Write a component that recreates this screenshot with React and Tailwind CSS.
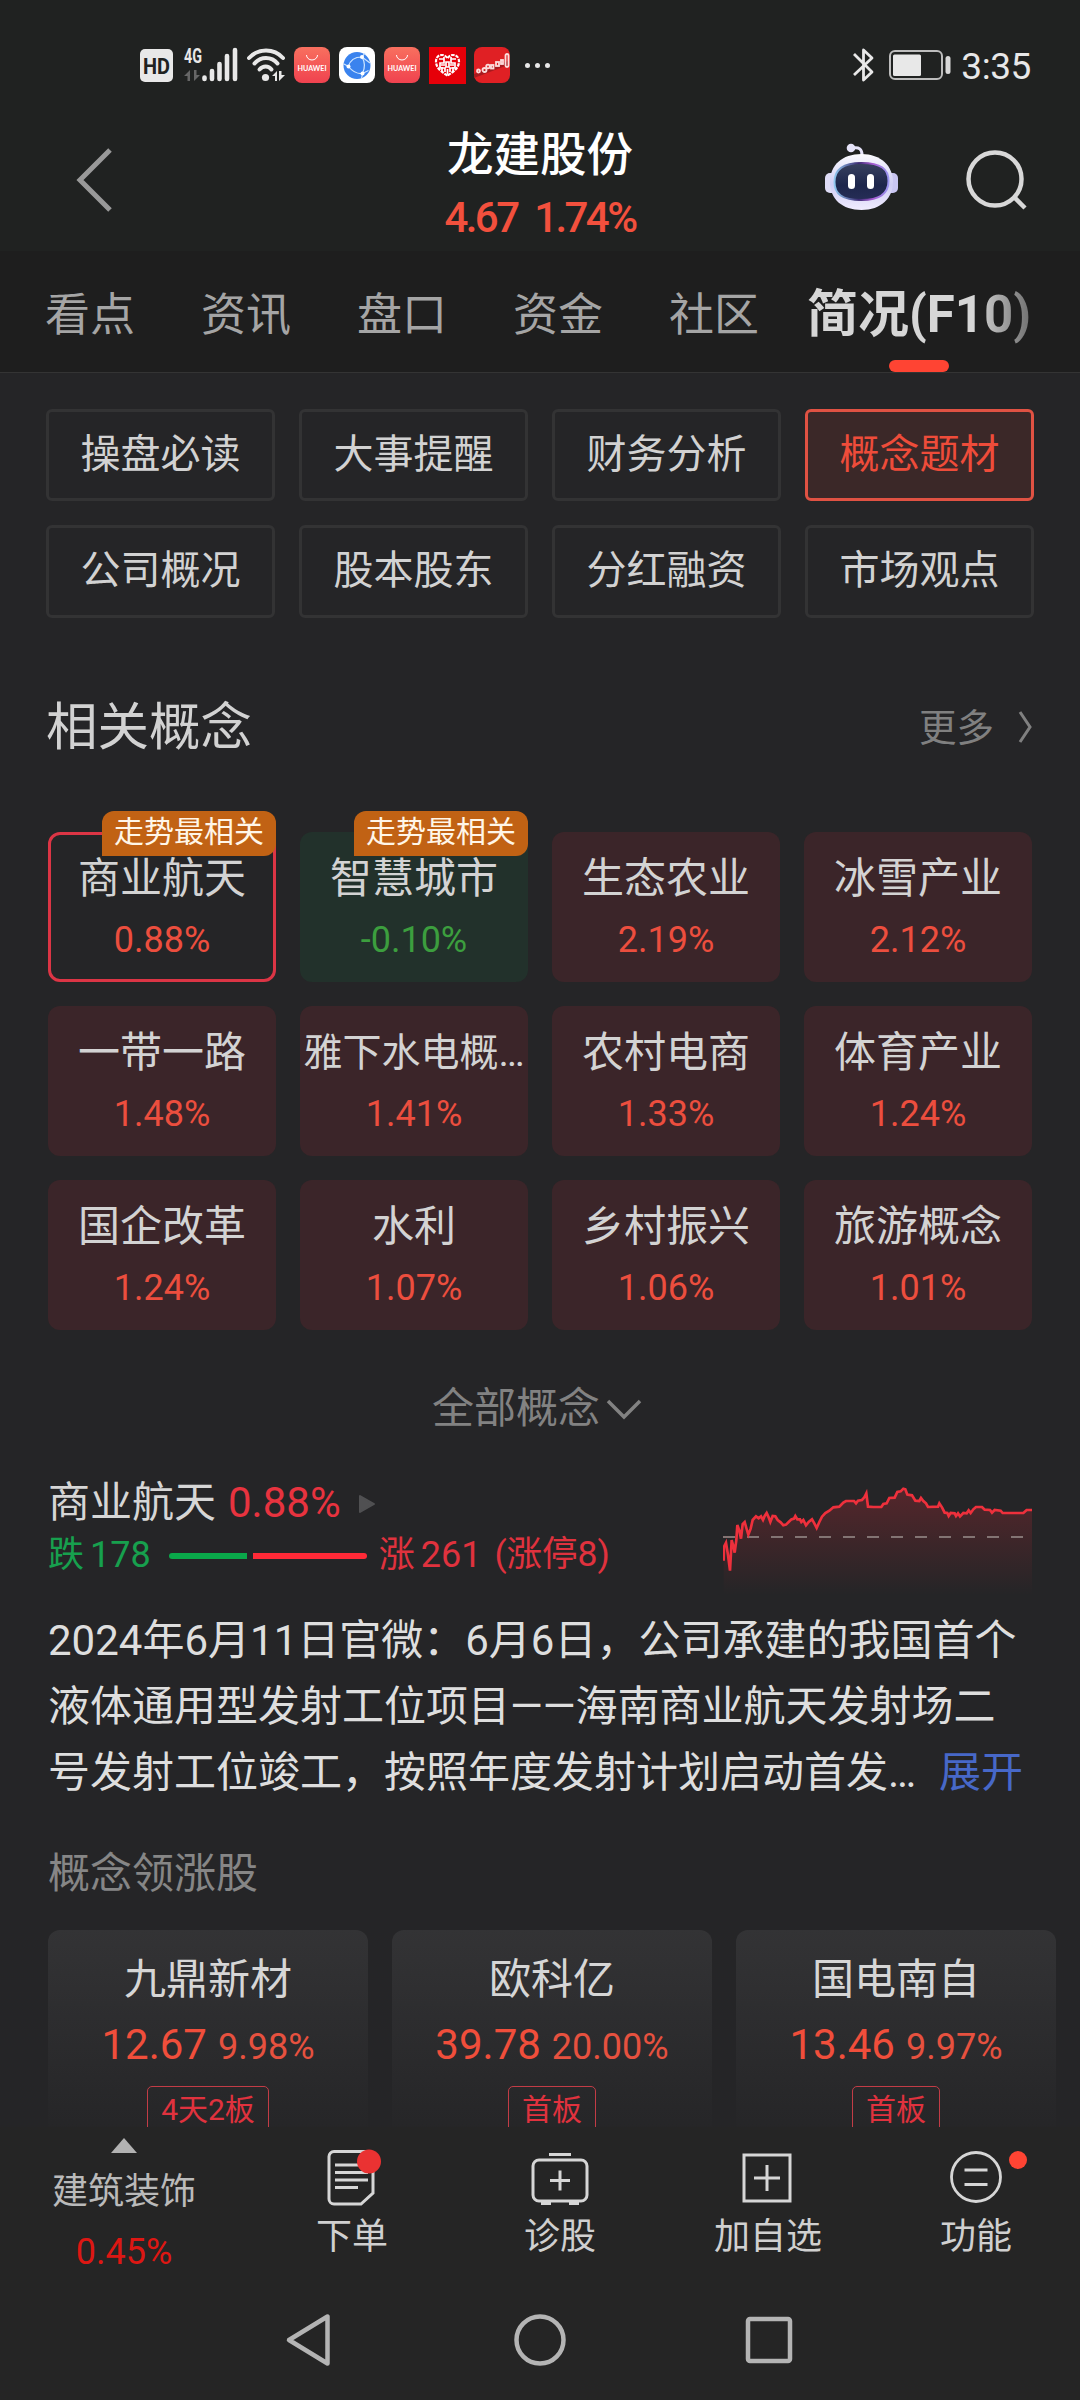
import React from "react";

const navButtons = ["操盘必读", "大事提醒", "财务分析", "概念题材", "公司概况", "股本股东", "分红融资", "市场观点"];

const concepts = [
  { name: "商业航天", pct: "0.88%", kind: "selected", badge: true },
  { name: "智慧城市", pct: "-0.10%", kind: "down", badge: true },
  { name: "生态农业", pct: "2.19%" },
  { name: "冰雪产业", pct: "2.12%" },
  { name: "一带一路", pct: "1.48%" },
  { name: "雅下水电概…", pct: "1.41%", small: true },
  { name: "农村电商", pct: "1.33%" },
  { name: "体育产业", pct: "1.24%" },
  { name: "国企改革", pct: "1.24%" },
  { name: "水利", pct: "1.07%" },
  { name: "乡村振兴", pct: "1.06%" },
  { name: "旅游概念", pct: "1.01%" },
];

const leaders = [
  { name: "九鼎新材", price: "12.67", pct: "9.98%", tag: "4天2板" },
  { name: "欧科亿", price: "39.78", pct: "20.00%", tag: "首板" },
  { name: "国电南自", price: "13.46", pct: "9.97%", tag: "首板" },
];

const linePoints =
  "191,362 192,320 198,308 204,345 210,392 215,300 220,318 224,338 229,300 232,255 238,272 243,296 248,252 254,246 259,264 265,284 272,266 278,240 288,229 296,235 303,229 309,240 314,228 320,219 326,232 331,246 338,228 346,229 353,240 362,247 370,256 378,254 386,246 394,238 402,236 406,228 412,238 420,238 424,246 430,240 438,256 446,246 456,238 463,250 470,264 478,246 486,230 496,219 508,212 520,202 538,200 550,188 558,183 582,183 588,190 594,182 606,180 613,172 619,160 624,200 640,201 664,201 670,192 680,190 688,174 704,173 712,156 722,154 730,146 736,148 742,164 756,166 766,182 778,183 783,174 790,183 798,190 804,201 834,200 838,190 846,202 854,218 862,219 866,228 872,219 884,220 888,228 894,220 900,229 910,219 920,220 926,211 932,219 940,208 948,201 966,201 974,209 990,210 996,218 1004,210 1022,212 1028,219 1090,219 1100,210 1116,210";

function HuaweiIcon({ id }) {
  return (
    <svg width="36" height="36" viewBox="0 0 36 36">
      <defs>
        <linearGradient id={id} x1="0" y1="0" x2="0" y2="1">
          <stop offset="0" stopColor="#f8705f" />
          <stop offset="1" stopColor="#f0424f" />
        </linearGradient>
      </defs>
      <rect width="36" height="36" rx="8" fill={`url(#${id})`} />
      <path d="M12.500 8a5.500 5 0 0 0 11 0" fill="none" stroke="#fff" strokeWidth="1" />
      <text x="18" y="24" textAnchor="middle" fontSize="6.500" fontWeight="700" fontFamily="Lato, sans-serif" fill="#fff" textLength="29" lengthAdjust="spacingAndGlyphs">HUAWEI</text>
    </svg>
  );
}

function StatusBar() {
  return (
    <div className="flex h-[130px] items-center pl-[140px] pr-[49px]">
      <svg className="mt-[1px]" width="33" height="33" viewBox="0 0 33 33">
        <rect width="33" height="33" rx="5" fill="#e8e8e8" />
        <text x="16.500" y="24.500" textAnchor="middle" fontSize="22" fontWeight="700" fontFamily="Roboto, sans-serif" fill="#202221" textLength="27" lengthAdjust="spacingAndGlyphs">HD</text>
      </svg>
      <svg className="ml-[11px] overflow-visible" width="54" height="36" viewBox="0 0 54 36">
        <text x="0" y="16" fontSize="20.500" fontWeight="700" fontFamily="Roboto, sans-serif" fill="#e8e8e8" textLength="18" lengthAdjust="spacingAndGlyphs">4G</text>
        <path d="M0 29l6-6v11H3.500v-5zM10 23v11l6-6h-3.500v-5z" fill="#666" />
        <path d="M20.500 30.500V32M28 24v8M35.500 17v15M43 9v23M51 3v29" stroke="#e8e8e8" strokeWidth="4.600" strokeLinecap="round" />
      </svg>
      <svg className="ml-[8px]" width="40" height="36" viewBox="0 0 40 36">
        <g fill="none" stroke="#e8e8e8" strokeWidth="4" strokeLinecap="round">
          <path d="M3 11C12 1 28 1 37 11" />
          <path d="M8.500 16.500c6-7.500 17-7.500 23 0" />
          <path d="M13.500 22.500c3.500-4 9-4 12 0" />
        </g>
        <circle cx="19.500" cy="30.500" r="3.600" fill="#e8e8e8" />
        <path d="M26 29l5-5v10h-2v-5zM33 24v10l6-6h-3.500v-4z" fill="#e8e8e8" />
      </svg>
      <div className="ml-[8px] flex items-center gap-[9px]">
        <HuaweiIcon id="hw1" />
        <svg width="36" height="36" viewBox="0 0 36 36">
          <rect width="36" height="36" rx="8" fill="#fff" />
          <circle cx="18" cy="18.500" r="13.500" fill="#3a83ee" />
          <g fill="none" stroke="#cfe6ff" strokeWidth="1.200">
            <path d="M23 10C16 10 11 13 9.500 19.500C13 24 18 27 23.500 26.500C26 21 26 15 23 10z" />
            <path d="M23 10l3-4M9.500 19.500L5 17M23.500 26.500l-1 5M23 10l8 6M23.500 26.500l6-3" />
          </g>
          <circle cx="23" cy="10" r="2" fill="#fff" />
          <circle cx="9.500" cy="19.500" r="2" fill="#fff" />
          <circle cx="23.500" cy="26.500" r="2" fill="#fff" />
        </svg>
        <HuaweiIcon id="hw2" />
        <svg width="37" height="37" viewBox="0 0 37 37">
          <rect width="37" height="37" fill="#e60009" />
          <path d="M18.500 28.500C11 24 7 20 7 14.500c0-4 2.500-6.500 6-6.500 2.500 0 4.500 1.500 5.500 3.500C19.500 9.500 21.500 8 24 8c3.500 0 6 2.500 6 6.500 0 5.500-4 9.500-11.500 14z" fill="none" stroke="#fff" strokeWidth="2.200" strokeDasharray="3.500 1" />
          <path d="M10 12h5v4h-4v5h5v4M27 12h-5v4h4v5h-5v4M15 10v4M22 10v4M17 15h3v5h-3zM18.500 22v5M12 18h4M21 18h4M13 20v4M24 20v4" fill="none" stroke="#fff" strokeWidth="1.700" />
        </svg>
        <svg className="-ml-[1px]" width="36" height="36" viewBox="0 0 36 36">
          <rect width="36" height="36" rx="8" fill="#e02024" />
          <path d="M0 27L34 14v4L0 31z" fill="#a81a1e" />
          <g fill="none" stroke="#fbdcdc" strokeWidth="1.800">
            <circle cx="4.500" cy="24" r="1.500" /><circle cx="10.500" cy="23" r="2" /><circle cx="14" cy="19.500" r="1.800" />
            <rect x="17" y="18" width="2.500" height="3.500" /><rect x="22" y="15" width="3" height="4" /><rect x="27" y="13" width="2" height="4" />
            <rect x="31.500" y="7" width="3" height="13" rx="1.500" />
          </g>
        </svg>
      </div>
      <div className="ml-[15px] flex gap-[5px]">
        <i className="size-[5px] rounded-full bg-[#e8e8e8]" />
        <i className="size-[5px] rounded-full bg-[#e8e8e8]" />
        <i className="size-[5px] rounded-full bg-[#e8e8e8]" />
      </div>
      <svg className="ml-auto" width="23" height="36" viewBox="0 0 23 36">
        <path d="M2 7l18 18-8.500 8V3L20 11 2 28" fill="none" stroke="#e8e8e8" strokeWidth="2.800" strokeLinejoin="round" />
      </svg>
      <svg className="ml-[14px]" width="62" height="30" viewBox="0 0 62 30">
        <rect x="1" y="1" width="52" height="28" rx="5" fill="none" stroke="#bdbdbd" strokeWidth="2" />
        <rect x="4" y="4.500" width="28" height="21.500" rx="1.500" fill="#e8e8e8" />
        <rect x="56.500" y="6" width="5" height="18" rx="2.500" fill="#d8d8d8" />
      </svg>
      <span className="ml-[10px] mt-[3px] text-[37px] leading-[40px] tracking-[-0.400px] text-[#e8e8e8]">3:35</span>
    </div>
  );
}

function Robot() {
  return (
    <svg width="73" height="68" viewBox="0 0 73 68">
      <defs>
        <linearGradient id="shell" x1="0" y1="0" x2="0" y2="1">
          <stop offset="0" stopColor="#fbfbff" />
          <stop offset="0.550" stopColor="#cfcdf4" />
          <stop offset="1" stopColor="#f0ecff" />
        </linearGradient>
        <linearGradient id="rim" x1="0" y1="0" x2="1" y2="0">
          <stop offset="0" stopColor="#8fc6ee" />
          <stop offset="0.450" stopColor="#3b2a72" />
          <stop offset="0.700" stopColor="#a55ad0" />
          <stop offset="1" stopColor="#9a96f0" />
        </linearGradient>
        <linearGradient id="face" x1="0" y1="0" x2="0" y2="1">
          <stop offset="0" stopColor="#38415f" />
          <stop offset="0.600" stopColor="#1d264c" />
          <stop offset="1" stopColor="#262d56" />
        </linearGradient>
      </defs>
      <rect x="0" y="30" width="12" height="20" rx="5" fill="#dedcf6" />
      <rect x="61" y="30" width="12" height="20" rx="5" fill="#c9c6f2" />
      <path d="M28 5c6-1 9 1 9 7" fill="none" stroke="#e6e4fa" strokeWidth="3" />
      <circle cx="26" cy="5" r="4.300" fill="#e6e4fa" />
      <path d="M36.500 11C56 11 68 23 68 39S56 67 36.500 67 5 56 5 39 17 11 36.500 11z" fill="url(#shell)" />
      <path d="M36.500 20C56 20 63.500 26 63.500 38S56 57 36.500 57 9.500 51 9.500 39 17 20 36.500 20z" fill="url(#face)" stroke="url(#rim)" strokeWidth="2" />
      <rect x="23" y="31" width="7" height="15" rx="3.500" fill="#fff" />
      <rect x="42" y="31" width="7" height="15" rx="3.500" fill="#fff" />
    </svg>
  );
}

function Header() {
  return (
    <div className="grid h-[121px] grid-cols-[1fr_auto_1fr]">
      <svg className="ml-[75px] mt-[18px]" width="40" height="64" viewBox="0 0 40 64">
        <path d="M35 2L5 32l30 30" fill="none" stroke="#999" strokeWidth="5" />
      </svg>
      <div className="flex flex-col items-center">
        <h1 className="text-[46.500px] font-medium leading-[50px] text-white">龙建股份</h1>
        <div className="mt-[15px] whitespace-nowrap text-[42px] font-medium leading-[46px] tracking-[-2.600px] [word-spacing:9px] text-[#f2503d]">4.67 1.74%</div>
      </div>
      <div className="flex justify-end gap-[68px] pr-[53px] pt-[13px]">
        <Robot />
        <svg className="mt-[7px]" width="61" height="61" viewBox="0 0 61 61">
          <circle cx="29" cy="29" r="26.500" fill="none" stroke="#d8d8d8" strokeWidth="4.500" />
          <path d="M48 47l11 11" stroke="#d8d8d8" strokeWidth="4.500" />
        </svg>
      </div>
    </div>
  );
}

function Tabs() {
  return (
    <div className="flex h-[122px] items-center gap-[66px] border-b border-[#343434] bg-[#1e1e1e] pl-[45px] text-[45px] text-[#a5a5a5]">
      {["看点", "资讯", "盘口", "资金", "社区"].map((t) => (
        <span key={t} className="w-[90px] shrink-0 whitespace-nowrap pt-[8px]">{t}</span>
      ))}
      <div className="relative -ml-[18px] flex h-full shrink-0 items-center whitespace-nowrap pt-[7px] text-[51px] font-bold">
        <span className="bg-linear-to-r from-[#d6d6d6] from-75% to-[#707070] bg-clip-text leading-[70px] text-transparent">简况(F10)</span>
        <i className="absolute bottom-0 left-1/2 h-[12px] w-[60px] -translate-x-1/2 rounded-full bg-[#ff4433]" />
      </div>
    </div>
  );
}

function ConceptCard({ c }) {
  const box =
    c.kind === "selected"
      ? "border-[3px] border-[#dc3545]"
      : c.kind === "down"
      ? "bg-[#22312b]"
      : "bg-[#3b2529]";
  const pos = c.kind === "selected" ? "pt-[14px]" : "pt-[17px]";
  return (
    <div className={`relative flex h-[150px] flex-col items-center rounded-[12px] ${box} ${pos}`}>
      <div className={`whitespace-nowrap leading-[60px] text-[#d3d3d3] ${c.small ? "text-[39px]" : "text-[42px]"}`}>{c.name}</div>
      <div className={`mt-[8px] text-[36px] leading-[46px] ${c.kind === "down" ? "text-[#3c9e3e]" : "text-[#ec4e3e]"}`}>{c.pct}</div>
      {c.badge && (
        <div className={`absolute flex h-[45px] w-[174px] items-center justify-center rounded-[12px] rounded-bl-none bg-[#c16214] pb-[3px] text-[30px] leading-[40px] text-[#fff6e8] ${c.kind === "selected" ? "-right-[3px] -top-[24px]" : "right-0 -top-[21px]"}`}>
          走势最相关
        </div>
      )}
    </div>
  );
}

function Sparkline() {
  return (
    <svg className="mt-[5px]" width="309" height="115" viewBox="189 120 927 345">
      <defs>
        <linearGradient id="area" gradientUnits="userSpaceOnUse" x1="0" y1="146" x2="0" y2="465">
          <stop offset="0" stopColor="#ff2a3a" stopOpacity="0.220" />
          <stop offset="1" stopColor="#ff2a3a" stopOpacity="0" />
        </linearGradient>
      </defs>
      <polygon points={`191,465 ${linePoints} 1116,465`} fill="url(#area)" />
      <path d="M189 291H1116" stroke="#837473" strokeWidth="6" strokeDasharray="36 36" />
      <polyline points={linePoints} fill="none" stroke="#ee303c" strokeWidth="8" />
    </svg>
  );
}

function BottomItem({ label, children }) {
  return (
    <div className="flex w-[208px] flex-col items-center pt-[20px]">
      <div className="relative flex h-[62px] items-start justify-center">{children}</div>
      <span className="mt-[4px] text-[36px] leading-[48px] text-[#d0d0d0]">{label}</span>
    </div>
  );
}

export default function App() {
  return (
    <div className="flex h-[2400px] w-[1080px] flex-col overflow-hidden bg-[#252527] font-['Roboto','Noto_Sans_CJK_SC',sans-serif]" lang="zh-CN">
      <header className="shrink-0 bg-[#202221]">
        <StatusBar />
        <Header />
      </header>
      <Tabs />

      <main className="h-[1754px] shrink-0 overflow-hidden pt-[36px]">
        <div className="ml-[46px] grid w-[988px] grid-cols-4 grid-rows-[92px_93px] gap-[24px]">
          {navButtons.map((b) => (
            <div
              key={b}
              className={`flex items-center justify-center rounded-[6px] border-[3px] pb-[1px] text-[40px] leading-[60px] ${
                b === "概念题材" ? "border-[#e05243] bg-[#3b2828] text-[#ee4c3a]" : "border-[#333334] text-[#d2d2d2]"
              }`}
            >
              {b}
            </div>
          ))}
        </div>

        <div className="ml-[46px] mt-[77px] flex h-[66px] w-[988px] items-center">
          <h2 className="text-[51.500px] leading-[66px] text-[#d2d2d2]">相关概念</h2>
          <span className="ml-auto text-[37.500px] text-[#808080]">更多</span>
          <svg className="-mt-[2px] ml-[24px]" width="16" height="34" viewBox="0 0 16 34">
            <path d="M2 2l10 15L2 32" fill="none" stroke="#808080" strokeWidth="3" />
          </svg>
        </div>

        <div className="ml-[48px] mt-[71px] grid w-[984px] grid-cols-4 gap-[24px]">
          {concepts.map((c) => <ConceptCard key={c.name} c={c} />)}
        </div>

        <div className="mt-[48px] flex h-[60px] items-center pl-[432px] text-[42px] text-[#828282]">
          全部概念
          <svg className="ml-[6px] mt-[4px]" width="36" height="22" viewBox="0 0 36 22">
            <path d="M2 2l16 16L34 2" fill="none" stroke="#828282" strokeWidth="3.500" />
          </svg>
        </div>

        <div className="mx-[48px] mt-[37px] flex h-[120px] justify-between">
          <div>
            <div className="flex h-[55px] items-center text-[42px]">
              <span className="text-[#d6d6d6]">商业航天</span>
              <span className="ml-[12px] text-[#e8333f]">0.88%</span>
              <svg className="ml-[17px] mt-[3px]" width="18" height="20" viewBox="0 0 18 20">
                <path d="M2 2v16l14-8z" fill="#505052" stroke="#505052" strokeWidth="2" strokeLinejoin="round" />
              </svg>
            </div>
            <div className="mt-[2px] flex h-[45px] items-center text-[36px]">
              <span className="text-[#17a04e]">跌</span>
              <span className="ml-[6px] text-[#17a04e]">178</span>
              <i className="ml-[18px] mt-[2px] h-[6px] w-[78px] rounded-l-full bg-[#0aa84a]" />
              <i className="ml-[6px] mt-[2px] h-[6px] w-[114px] rounded-r-full bg-[#ff2a37]" />
              <span className="ml-[12px] text-[#e0323e]">涨</span>
              <span className="ml-[6px] text-[#e0323e]">261</span>
              <span className="ml-[13px] text-[35.500px] text-[#e0323e]">(涨停8)</span>
            </div>
          </div>
          <Sparkline />
        </div>

        <div className="ml-[48px] mt-[13px] whitespace-nowrap text-[42px] leading-[66px] text-[#dedede]">
          <div>2024年6月11日官微：6月6日，公司承建的我国首个</div>
          <div>液体通用型发射工位项目<span className="font-['Roboto']">——</span>海南商业航天发射场二</div>
          <div className="flex">
            号发射工位竣工，按照年度发射计划启动首发…
            <span className="ml-[23px] text-[#4768c8]">展开</span>
          </div>
        </div>

        <div className="ml-[48px] mt-[35px] text-[42px] leading-[66px] text-[#868686]">概念领涨股</div>

        <div className="ml-[48px] mt-[23px] grid grid-cols-[320px_320px_320px] gap-[24px]">
          {leaders.map((s) => (
            <div key={s.name} className="flex h-[230px] flex-col items-center rounded-[12px] bg-linear-to-b from-[#333335] to-[#252527] to-90% pt-[20px]">
              <div className="text-[42px] leading-[60px] text-[#d6d6d6]">{s.name}</div>
              <div className="mt-[5px] flex h-[60px] items-baseline gap-[11px] text-[#f04e3b]">
                <span className="text-[42px] leading-[60px]">{s.price}</span>
                <span className="text-[36px] leading-[60px] text-[#e6513f]">{s.pct}</span>
              </div>
              <div className="mt-[11px] flex h-[50px] items-center rounded-[5px] border border-[#c23c46] px-[13px] pb-[2px] text-[30px] leading-[36px] text-[#e0323e]">{s.tag}</div>
            </div>
          ))}
        </div>
      </main>

      <footer className="flex h-[273px] shrink-0 flex-col bg-[#252525]">
        <div className="flex h-[153px]">
          <div className="flex w-[248px] flex-col items-center pt-[11px]">
            <svg width="26" height="15" viewBox="0 0 26 15"><path d="M13 0l13 15H0z" fill="#b2b2b2" /></svg>
            <span className="mt-[15px] text-[36px] leading-[48px] text-[#bababa]">建筑装饰</span>
            <span className="mt-[12px] text-[36px] leading-[48px] text-[#dd1713]">0.45%</span>
          </div>
          <BottomItem label="下单">
            <svg className="ml-[4px] mt-[2px]" width="56" height="58" viewBox="0 0 56 58">
              <g fill="none" stroke="#d6d6d6" strokeWidth="3">
                <path d="M8 2.500h34a5 5 0 0 1 5 5V44l-12 11H8a5 5 0 0 1-5-5V7.500a5 5 0 0 1 5-5z" />
                <path d="M9 16h25M9 23.500h33M9 31h33M9 38.500h23" />
              </g>
              <circle cx="43" cy="12.500" r="12" fill="#ea3232" />
            </svg>
          </BottomItem>
          <BottomItem label="诊股">
            <svg className="mt-[5px]" width="58" height="54" viewBox="0 0 58 54">
              <g fill="none" stroke="#d6d6d6" strokeWidth="3">
                <rect x="2" y="8" width="54" height="41" rx="6" />
                <path d="M18 2.500h22M29 18.500v20M19 28.500h20" />
              </g>
              <path d="M10 49h10v4H10zM38 49h10v4H38z" fill="#d6d6d6" />
            </svg>
          </BottomItem>
          <BottomItem label="加自选">
            <svg className="mr-[2px] mt-[6px]" width="50" height="50" viewBox="0 0 50 50">
              <path d="M2 2h46v46H2zM25 12v26M12 25h26" fill="none" stroke="#d6d6d6" strokeWidth="3" />
            </svg>
          </BottomItem>
          <BottomItem label="功能">
            <svg className="mt-[4px]" width="52" height="52" viewBox="0 0 52 52">
              <circle cx="26" cy="26" r="24.500" fill="none" stroke="#d6d6d6" strokeWidth="2.800" />
              <path d="M14.500 19h23M14.500 33.500h23" stroke="#d6d6d6" strokeWidth="3" />
            </svg>
            <i className="absolute -right-[25px] top-[4px] size-[18px] rounded-full bg-[#ff4433]" />
          </BottomItem>
        </div>
        <nav className="flex h-[120px] items-center pl-[284px]">
          <svg width="48" height="56" viewBox="0 0 48 56">
            <path d="M43.500 4.500v47L5 28z" fill="none" stroke="#b4b4b4" strokeWidth="4.500" strokeLinejoin="round" />
          </svg>
          <svg className="ml-[181px]" width="54" height="54" viewBox="0 0 54 54">
            <circle cx="27" cy="27" r="23.500" fill="none" stroke="#b4b4b4" strokeWidth="4.500" />
          </svg>
          <svg className="ml-[178px]" width="48" height="48" viewBox="0 0 48 48">
            <rect x="3" y="3" width="42" height="42" rx="2" fill="none" stroke="#b4b4b4" strokeWidth="4.500" />
          </svg>
        </nav>
      </footer>
    </div>
  );
}
